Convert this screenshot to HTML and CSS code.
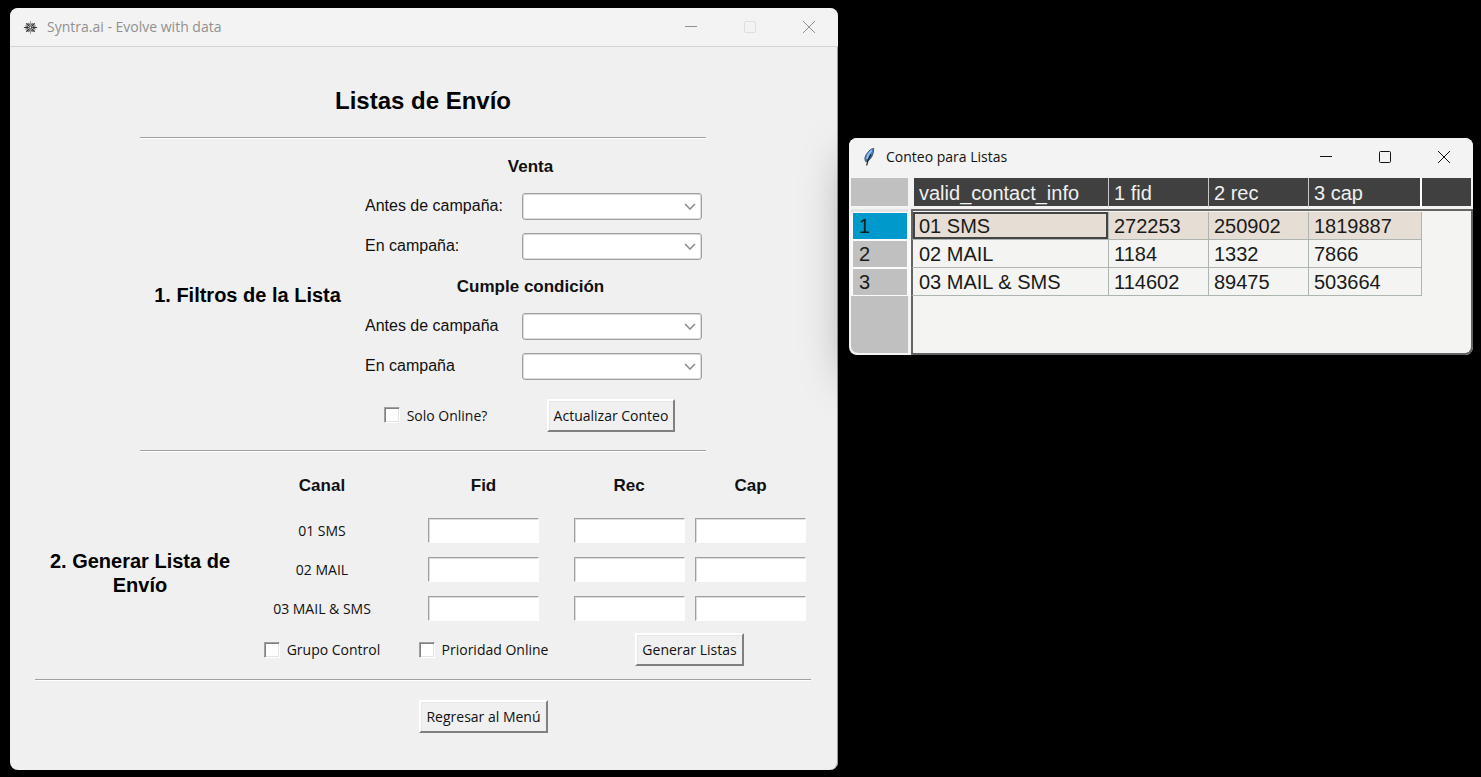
FILE: index.html
```html
<!DOCTYPE html>
<html lang="es">
<head>
<meta charset="utf-8">
<title>Syntra.ai - Evolve with data</title>
<link rel="stylesheet" href="styles.css">
</head>
<body>
<main class="desktop">
  <section class="window window-main" aria-label="Syntra.ai">
    <header class="titlebar titlebar-inactive">
      <svg class="app-icon" viewBox="0 0 16 16" fill="none" stroke="#333" stroke-linecap="round" aria-hidden="true">
        <path d="M1.500 8h4M10.500 8h4" stroke-width="1.300"/>
        <path d="M8 1.500v4M8 10.500v4" stroke-width="1" stroke="#999"/>
        <path d="M4 4l2.200 2.200M9.800 9.800L12 12M12 4L9.800 6.200M6.200 9.800L4 12" stroke-width="1.500"/>
        <path d="M6.200 3.500l.6 1.600M9.800 3.500l-.6 1.600M6.200 12.500l.6-1.600M9.800 12.500l-.6-1.600M3 6.300l1.800.6M13 6.300l-1.800.6M3 9.700l1.800-.6M13 9.700l-1.800-.6" stroke-width="1"/>
        <circle cx="8" cy="8" r="1.500" stroke-width="1"/>
      </svg>
      <span class="titlebar-text">Syntra.ai - Evolve with data</span>
      <div class="caption-buttons">
        <button class="caption" aria-label="Minimizar"><svg viewBox="0 0 12 12"><path d="M0 5.500h12"/></svg></button>
        <button class="caption" aria-label="Maximizar" disabled><svg viewBox="0 0 12 12"><rect x=".5" y=".5" width="11" height="11" rx="1"/></svg></button>
        <button class="caption" aria-label="Cerrar"><svg viewBox="0 0 12 12"><path d="M0 0l12 12M12 0L0 12"/></svg></button>
      </div>
    </header>
    <form class="content">
      <h1 class="page-title">Listas de Envío</h1>
      <hr class="rule rule-narrow">
      <div class="filters">
        <h2 class="section-title">1. Filtros de la Lista</h2>
        <div class="filter-grid">
          <h3 class="group-title">Venta</h3>
          <label class="field-label" for="venta-antes">Antes de campaña:</label>
          <div class="combo"><select id="venta-antes"><option></option></select><svg viewBox="0 0 12 7"><path d="M1 1l5 5 5-5"/></svg></div>
          <label class="field-label" for="venta-en">En campaña:</label>
          <div class="combo"><select id="venta-en"><option></option></select><svg viewBox="0 0 12 7"><path d="M1 1l5 5 5-5"/></svg></div>
          <h3 class="group-title">Cumple condición</h3>
          <label class="field-label" for="cond-antes">Antes de campaña</label>
          <div class="combo"><select id="cond-antes"><option></option></select><svg viewBox="0 0 12 7"><path d="M1 1l5 5 5-5"/></svg></div>
          <label class="field-label" for="cond-en">En campaña</label>
          <div class="combo"><select id="cond-en"><option></option></select><svg viewBox="0 0 12 7"><path d="M1 1l5 5 5-5"/></svg></div>
          <label class="check"><input type="checkbox">Solo Online?</label>
          <button type="button" class="push">Actualizar Conteo</button>
        </div>
      </div>
      <hr class="rule rule-narrow">
      <div class="lists">
        <h2 class="section-title lists-title">2. Generar Lista de Envío</h2>
        <h3 class="column-title">Canal</h3>
        <h3 class="column-title">Fid</h3>
        <h3 class="column-title">Rec</h3>
        <h3 class="column-title">Cap</h3>
        <span class="channel">01 SMS</span>
        <input class="entry" type="text" aria-label="01 SMS Fid">
        <input class="entry" type="text" aria-label="01 SMS Rec">
        <input class="entry" type="text" aria-label="01 SMS Cap">
        <span class="channel">02 MAIL</span>
        <input class="entry" type="text" aria-label="02 MAIL Fid">
        <input class="entry" type="text" aria-label="02 MAIL Rec">
        <input class="entry" type="text" aria-label="02 MAIL Cap">
        <span class="channel">03 MAIL &amp; SMS</span>
        <input class="entry" type="text" aria-label="03 MAIL &amp; SMS Fid">
        <input class="entry" type="text" aria-label="03 MAIL &amp; SMS Rec">
        <input class="entry" type="text" aria-label="03 MAIL &amp; SMS Cap">
        <label class="check"><input type="checkbox">Grupo Control</label>
        <label class="check"><input type="checkbox">Prioridad Online</label>
        <button type="button" class="push push-generate">Generar Listas</button>
      </div>
      <hr class="rule rule-wide">
      <div class="footer">
        <button type="button" class="push push-back">Regresar al Menú</button>
      </div>
    </form>
  </section>

  <section class="window window-count" aria-label="Conteo para Listas">
    <header class="titlebar">
      <svg class="app-icon feather" viewBox="0 0 16 20" aria-hidden="true">
        <path d="M12.500.8C9 1.200 4.800 5.500 3.400 10c-.5 1.800-.3 3.600.6 5l2.500-.8c3.500-2.400 6-7.200 6-13.400z" fill="#3f7fc8" stroke="#4a5058" stroke-width="1"/>
        <path d="M10.500 3C8 5 6 8 5.200 12" stroke="#8fc0f4" stroke-width="1.800" fill="none"/>
        <path d="M9.500 7.500C7.500 10.500 5.500 14 5 19M8.500 8.500l1.500-.5" stroke="#1c1c1c" stroke-width="1.200" fill="none"/>
      </svg>
      <span class="titlebar-text">Conteo para Listas</span>
      <div class="caption-buttons">
        <button class="caption" aria-label="Minimizar"><svg viewBox="0 0 12 12"><path d="M0 5.500h12"/></svg></button>
        <button class="caption" aria-label="Maximizar"><svg viewBox="0 0 12 12"><rect x=".5" y=".5" width="11" height="11" rx="1"/></svg></button>
        <button class="caption" aria-label="Cerrar"><svg viewBox="0 0 12 12"><path d="M0 0l12 12M12 0L0 12"/></svg></button>
      </div>
    </header>
    <table class="sheet">
      <colgroup>
        <col class="col-index"><col class="col-info"><col class="col-fid"><col class="col-rec"><col class="col-cap"><col>
      </colgroup>
      <thead>
        <tr><td class="corner"></td><th scope="col">valid_contact_info</th><th scope="col">1 fid</th><th scope="col">2 rec</th><th scope="col">3 cap</th><td class="head-rest"></td></tr>
      </thead>
      <tbody>
        <tr class="spacer"><td class="index-gap"></td><td colspan="5"></td></tr>
        <tr class="selected"><th scope="row">1</th><td class="active">01 SMS</td><td>272253</td><td>250902</td><td>1819887</td><td class="rest"></td></tr>
        <tr><th scope="row">2</th><td>02 MAIL</td><td>1184</td><td>1332</td><td>7866</td><td class="rest"></td></tr>
        <tr><th scope="row">3</th><td>03 MAIL &amp; SMS</td><td>114602</td><td>89475</td><td>503664</td><td class="rest"></td></tr>
        <tr class="blank"><td class="index-rest"></td><td colspan="5"></td></tr>
      </tbody>
    </table>
  </section>
</main>
</body>
</html>
```
FILE: styles.css
```css
* { box-sizing: border-box; }

body {
  margin: 0;
  background: #000;
  color: #111;
  font-family: "Open Sans", "Noto Sans", sans-serif;
  font-size: 14px;
}

h1, h2, h3 {
  margin: 0;
  color: #000;
  font-family: "Liberation Sans", Arial, sans-serif;
  font-weight: 700;
}

button { font: inherit; color: inherit; }

.desktop {
  display: grid;
  grid-template-columns: minmax(0, 828fr) minmax(0, 624fr);
  gap: 11px;
  align-items: start;
  padding: 8px 8px 7px 10px;
}

/* Windows */
.window {
  border-radius: 8px;
  background: #f0f0f0;
}
.window-main { overflow: hidden; box-shadow: inset -1px 0 #999; }
.window-count {
  margin-top: 130px;
  background: #f3f3f3;
  box-shadow: 0 20px 48px rgba(0, 0, 0, 0.36);
}

.titlebar {
  display: flex;
  align-items: center;
  height: 39px;
  padding-left: 13px;
  background: #f3f3f3;
  border-radius: 8px 8px 0 0;
}
.titlebar-inactive {
  border-bottom: 1px solid #d4d4d4;
  color: #909090;
}
.window-count .titlebar { height: 40px; padding-bottom: 2px; }
.app-icon { width: 15px; height: 15px; }
.feather { height: 20px; }
.titlebar-text { margin-left: 9px; padding-bottom: 2px; }
.caption-buttons { display: flex; margin-left: auto; }
.caption {
  display: grid;
  place-items: center;
  width: 59px;
  height: 37px;
  padding: 0;
  border: 0;
  background: none;
}
.caption svg {
  width: 12px;
  height: 12px;
  fill: none;
  stroke: currentColor;
  stroke-width: 1;
  overflow: visible;
}
.caption:disabled { color: #dedede; }

/* Form */
.content { padding: 41px 27px 37px 25px; }
.page-title {
  font-size: 24px;
  line-height: 26px;
  text-align: center;
}
.rule {
  height: 2px;
  margin: 0 auto;
  border: 0;
  border-top: 1px solid #a0a0a0;
  border-bottom: 1px solid #fff;
}
.rule-narrow { max-width: 566px; }
.page-title + .rule { margin-top: 23px; }

.section-title {
  font-size: 20px;
  line-height: 24px;
  text-align: center;
}
.group-title, .column-title {
  color: #111;
  font-size: 17px;
  line-height: 23px;
  text-align: center;
}

.filters {
  display: grid;
  grid-template-columns: 215fr 351fr;
  align-items: center;
  max-width: 566px;
  margin: 0 auto;
  padding: 7px 0 6px;
}
.filter-grid {
  display: grid;
  grid-template-columns: 161fr 190fr;
  grid-template-rows: repeat(6, 40px) 58px;
  align-items: center;
}
.group-title { grid-column: 1 / -1; }
.field-label {
  padding-left: 10px;
  font-family: "Liberation Sans", Arial, sans-serif;
  font-size: 16px;
}
.combo {
  display: grid;
  align-items: center;
  padding: 0 4px 0 6px;
}
.combo select, .combo svg { grid-area: 1 / 1; }
.combo select {
  appearance: none;
  width: 100%;
  height: 27px;
  border: 1px solid #a0a0a0;
  border-radius: 3px;
  background: #fff;
  box-shadow: inset 0 0 0 1px #dcdcdc;
}
.combo svg {
  justify-self: end;
  width: 12px;
  height: 7px;
  margin-right: 6px;
  fill: none;
  stroke: #8a8a8a;
  stroke-width: 1.500;
  pointer-events: none;
}

.check {
  display: flex;
  align-items: center;
  justify-content: center;
  gap: 7px;
}
.check input {
  appearance: none;
  width: 16px;
  height: 16px;
  margin: 0;
  border: 1px solid;
  border-color: #a0a0a0 #fff #fff #a0a0a0;
  background: #fff;
  box-shadow: inset 1px 1px #808080, inset -1px -1px #e3e3e3;
}

.push {
  justify-self: center;
  height: 33px;
  padding: 0 5px;
  border: 2px solid;
  border-color: #fff #808080 #808080 #fff;
  background: #f0f0f0;
  box-shadow: inset 1px 1px #e6e6e6;
  white-space: nowrap;
}

.lists, .footer {
  display: grid;
  grid-template-columns: 210fr 154fr 169fr 122fr 121fr;
}
.lists {
  grid-template-rows: 37px repeat(3, 39px) 43px;
  align-items: center;
  padding: 22px 0 8px;
}
.lists-title { grid-row: 1 / -1; padding: 0 10px; }
.column-title { align-self: start; }
.channel { text-align: center; }
.entry {
  justify-self: center;
  width: 111px;
  max-width: 100%;
  height: 25px;
  border: 1px solid;
  border-color: #a0a0a0 #fff #fff #a0a0a0;
  background: #fff;
  box-shadow: inset 1px 1px #dcdcdc;
}
.push-generate { grid-column: 4 / 6; }
.footer { padding-top: 19px; }
.push-back { grid-column: 3; }

/* Count table */
.sheet {
  width: calc(100% - 2px);
  margin-left: 2px;
  table-layout: fixed;
  border-collapse: separate;
  border-spacing: 0;
  font-family: "Liberation Sans", Arial, sans-serif;
  font-size: 20px;
  line-height: 24px;
  color: #1a1a1a;
}
.col-index { width: 60px; }
.col-info { width: 198px; }
.col-fid, .col-rec { width: 100px; }
.col-cap { width: 113px; }

.sheet th { font-weight: 400; text-align: left; }
.sheet th, .sheet td { padding: 0 5px; }

.sheet thead th {
  height: 31px;
  padding-top: 2px;
  border-right: 1px solid #c8c8c8;
  border-bottom: 3px solid #f3f3f3;
  background: #404040;
  color: #f0f0f0;
}
.sheet thead th:nth-child(2) { border-left: 3px solid #f3f3f3; }
.sheet thead th:nth-child(5) { border-right: 2px solid #fff; }
.sheet .head-rest {
  border-right: 2px solid #f3f3f3;
  border-bottom: 3px solid #f3f3f3;
  background: #404040;
}
.sheet .corner {
  border-right: 3px solid #f3f3f3;
  border-bottom: 3px solid #f3f3f3;
  background: #c0c0c0;
}

.spacer td {
  height: 3px;
  border-top: 2px solid #646464;
  border-left: 2px solid #646464;
  border-right: 2px solid #646464;
  background: #c4c9c6;
}
.spacer .index-gap {
  border: 0;
  border-right: 3px solid #f3f3f3;
  background: #e4e4e4;
}

.sheet tbody th {
  height: 28px;
  padding-left: 6px;
  border: 1px solid #fafafa;
  border-left-width: 2px;
  border-right-width: 4px;
  background: #c0c0c0;
}
.sheet .selected th { background: #0099cc; }
.sheet tbody td { background: #f4f4f2; }
.sheet tbody th ~ td {
  border-right: 1px solid #adb5b1;
  border-bottom: 1px solid #adb5b1;
}
.sheet tbody th + td { border-left: 2px solid #646464; padding-left: 6px; }
.sheet .selected td { background: #e6ddd4; }
.sheet .selected .active { box-shadow: inset 0 0 0 2px #444; }
.sheet tbody th ~ .rest {
  border-bottom: 0;
  border-right: 2px solid #646464;
  background: #f4f4f2;
}
.blank td {
  height: 59px;
  border: 2px solid #646464;
  border-top: 0;
  border-bottom-right-radius: 8px;
}
.sheet .blank .index-rest {
  border: 0;
  border-right: 3px solid #f3f3f3;
  border-bottom: 2px solid #f3f3f3;
  border-radius: 0 0 0 8px;
  background: #c0c0c0;
}
```
